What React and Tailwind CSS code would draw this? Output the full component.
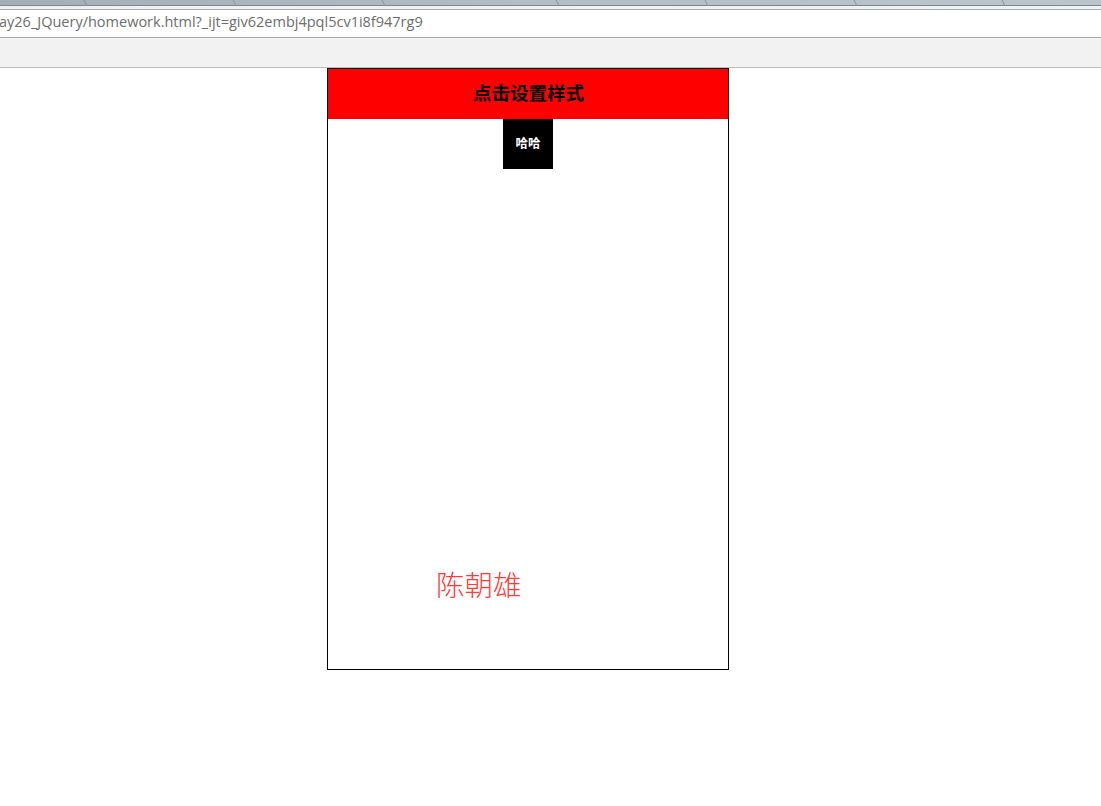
export default function App() {
  const seps = [84, 233, 382, 556, 705, 854, 1002];
  return (
    <div className="w-[1101px] h-[806px] bg-white overflow-hidden relative" style={{ fontFamily: '"Noto Sans", "Noto Sans CJK SC", sans-serif' }}>
      {/* tab strip */}
      <div className="h-[6px] bg-gradient-to-r from-[#a4aeb7] via-[#b3bdc5] to-[#bcc5cc] border-b border-[#7d8790] relative">
        <svg className="absolute inset-0" width="1101" height="6">
          {seps.map((x) => (
            <line key={x} x1={x} y1="0" x2={x + 3} y2="6" stroke="#8a949c" strokeWidth="1" />
          ))}
        </svg>
      </div>
      <div className="h-[4px] bg-[#eef0f2] border-b border-[#aaaaaa]" />
      {/* address bar */}
      <div className="h-[28px] bg-white border-b border-[#a9a9a9] flex items-center overflow-hidden">
        <span className="text-[14.5px] text-[#6d6d6d] whitespace-nowrap -ml-[1px] leading-none pb-[3px]" style={{ fontFamily: '"Open Sans", "Noto Sans", sans-serif' }}>
          ay26_JQuery/homework.html?_ijt=giv62embj4pql5cv1i8f947rg9
        </span>
      </div>
      {/* toolbar */}
      <div className="h-[30px] bg-[#f2f2f2] border-b border-[#bcbcbc]" />
      {/* page */}
      <div className="pl-[327px]">
        <div className="w-[402px] h-[602px] border border-black flex flex-col">
          <div className="h-[50px] bg-[#ff0000] flex items-center justify-center pb-[3px]">
            <span className="text-[18.5px] font-bold text-black leading-none pl-[1px]" style={{ fontFamily: '"Noto Sans CJK SC", sans-serif' }}>点击设置样式</span>
          </div>
          <div className="flex justify-center">
            <div className="w-[50px] h-[50px] bg-black flex items-center justify-center pb-[1px]">
              <span className="text-[12.5px] font-bold text-white leading-none" style={{ fontFamily: '"Noto Sans CJK SC", sans-serif' }}>哈哈</span>
            </div>
          </div>
          <div className="mt-[401px] pl-[108px]">
            <span className="text-[28.5px] text-[#ff3b3b] leading-none" style={{ fontFamily: '"Noto Sans CJK SC", sans-serif', fontWeight: 300 }}>陈朝雄</span>
          </div>
        </div>
      </div>
    </div>
  );
}
